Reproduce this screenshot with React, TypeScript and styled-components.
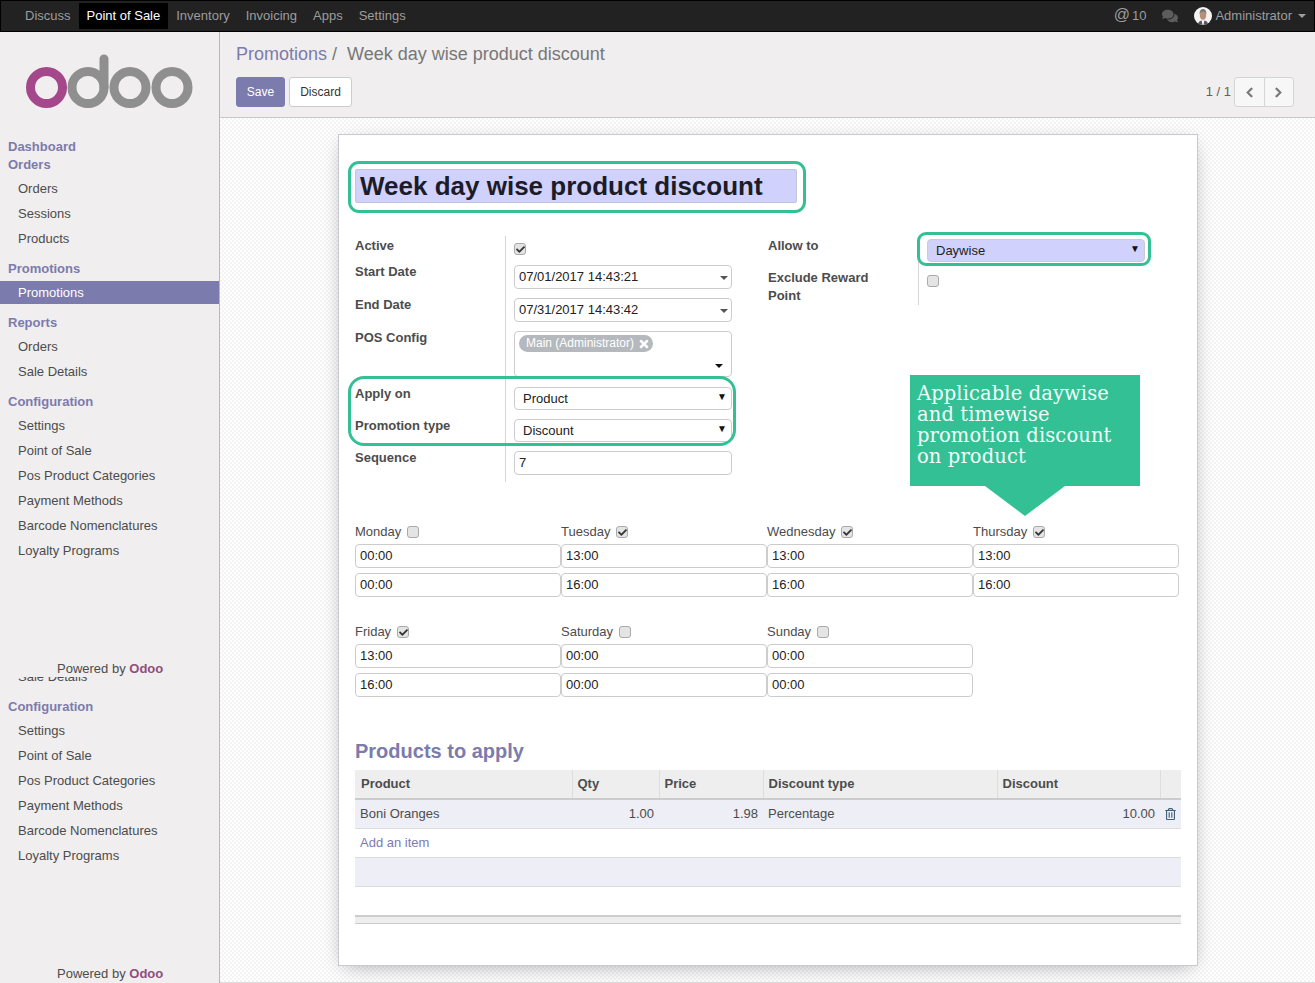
import React from 'react';
import styled, { createGlobalStyle } from 'styled-components';
import { FaChevronLeft, FaChevronRight, FaComments, FaRegTrashAlt, FaTimes, FaCheck } from 'react-icons/fa';

const PURPLE = '#7c7bad';
const GREEN = '#33c095';

const GlobalStyle = createGlobalStyle`
  html, body {
    margin: 0;
    height: 983px;
    overflow: hidden;
    background: #fff;
  }
  body {
    font-family: "Liberation Sans", Arial, sans-serif;
    font-size: 13px;
    line-height: 18px;
    color: #4c4c4c;
  }
  * {
    box-sizing: border-box;
  }
`;

const Page = styled.div`
  width: 1315px;
  height: 983px;
  display: flex;
  flex-direction: column;
  overflow: hidden;
`;

const TopBar = styled.header`
  height: 32px;
  flex-shrink: 0;
  display: flex;
  justify-content: space-between;
  align-items: stretch;
  padding: 2px 8px 2px 17px;
  background: #222;
  border: 1px solid #000;
`;

const TopNav = styled.nav`
  display: flex;
  margin-left: -1px;
`;

const TopLink = styled.a<{ active?: boolean }>`
  display: flex;
  align-items: center;
  padding: 0 8px;
  color: ${(props) => (props.active ? '#fff' : '#9d9d9d')};
  background: ${(props) => (props.active ? '#000' : 'transparent')};
`;

const TopRight = styled.div`
  display: flex;
  align-items: center;
  color: #9d9d9d;
`;

const AtCount = styled.span`
  display: flex;
  align-items: center;
  gap: 2px;
  margin-right: 16px;
`;

const AtSign = styled.span`
  font-size: 16px;
  margin-top: -2px;
`;

const ChatIcon = styled(FaComments)`
  width: 16px;
  height: 16px;
  margin-right: 16px;
  color: #5d5d5d;
`;

const Avatar = styled.svg`
  width: 18px;
  height: 18px;
  margin-right: 3px;
  border-radius: 50%;
`;

const Caret = styled.span`
  width: 0;
  height: 0;
  margin-left: 6px;
  border-left: 4px solid transparent;
  border-right: 4px solid transparent;
  border-top: 4px solid #9d9d9d;
`;

const Body = styled.div`
  flex: 1;
  display: flex;
  min-height: 0;
`;

const Sidebar = styled.aside`
  width: 220px;
  flex-shrink: 0;
  display: flex;
  flex-direction: column;
  background: #f0eeee;
  border-right: 1px solid #b8b8b8;
`;

const SidebarPane = styled.div<{ height: number }>`
  height: ${(props) => props.height}px;
  flex-shrink: 0;
  display: flex;
  flex-direction: column;
`;

const LogoBox = styled.div`
  height: 106px;
  padding: 21px 0 0 26px;
`;

const MenuHead = styled.div<{ top?: number; bottom?: number }>`
  margin-top: ${(props) => props.top ?? 0}px;
  margin-bottom: ${(props) => props.bottom ?? 0}px;
  padding: 0 8px;
  font-weight: bold;
  color: ${PURPLE};
`;

const MenuItem = styled.div<{ active?: boolean }>`
  height: 25px;
  flex-shrink: 0;
  padding: 0 18px;
  line-height: 25px;
  color: ${(props) => (props.active ? '#fff' : '#4c4c4c')};
  background: ${(props) => (props.active ? PURPLE : 'transparent')};
`;

const ActiveItem = styled(MenuItem)`
  height: 23px;
  line-height: 23px;
  margin: 3px 0 0;
`;

// the menu scrolled under the footer, only the feet of the letters show
const ClippedItem = styled.div`
  height: 5px;
  flex-shrink: 0;
  overflow: hidden;
  ${MenuItem} {
    margin-top: -13px;
  }
`;

const SidebarFooter = styled.div`
  margin-top: auto;
  height: 17px;
  padding-left: 57px;
  background: #f0eeee;
  b {
    color: #8f4f7f;
  }
`;

const Main = styled.main`
  flex: 1;
  min-width: 0;
  display: flex;
  flex-direction: column;
`;

const ControlPanel = styled.div`
  height: 86px;
  flex-shrink: 0;
  padding: 10px 21px 0 16px;
  background: #f0eeee;
  border-bottom: 1px solid #c8c8c8;
`;

const Breadcrumb = styled.div`
  height: 24px;
  margin-bottom: 11px;
  font-size: 18px;
  line-height: 24px;
  color: #777;
  a {
    color: ${PURPLE};
  }
  span {
    margin: 0 0 0 5px;
  }
`;

const ButtonRow = styled.div`
  display: flex;
  align-items: center;
  gap: 4px;
`;

const PrimaryButton = styled.button`
  width: 49px;
  height: 30px;
  padding: 0;
  font: 12px "Liberation Sans", Arial, sans-serif;
  color: #fff;
  background: ${PURPLE};
  border: 1px solid ${PURPLE};
  border-radius: 3px;
`;

const SecondaryButton = styled.button`
  width: 63px;
  height: 30px;
  padding: 0;
  font: 12px "Liberation Sans", Arial, sans-serif;
  color: #333;
  background: #fff;
  border: 1px solid #ccc;
  border-radius: 3px;
`;

const Pager = styled.div`
  margin-left: auto;
  display: flex;
  align-items: center;
  gap: 3px;
  color: #6d5c55;
`;

const PagerGroup = styled.div`
  display: flex;
  width: 60px;
  height: 30px;
  background: #f7f7f7;
  border: 1px solid #d5d5d5;
  border-radius: 3px;
`;

const PagerButton = styled.div<{ last?: boolean }>`
  flex: 1;
  display: flex;
  align-items: center;
  justify-content: center;
  color: #777;
  border-left: ${(props) => (props.last ? '1px solid #d5d5d5' : 'none')};
  svg {
    width: 11px;
    height: 11px;
    stroke: currentColor;
    stroke-width: 30;
  }
`;

const Content = styled.div`
  flex: 1;
  min-height: 0;
  padding: 16px 117px 0 118px;
  background-color: #fff;
  background-image: conic-gradient(#f4f4f4 25%, transparent 0 50%, #f4f4f4 0 75%, transparent 0);
  background-size: 4px 4px;
  border-bottom: 1px solid #ddd;
`;

const Sheet = styled.div`
  position: relative;
  width: 860px;
  height: 832px;
  padding: 26px 16px 0;
  background: #fff;
  border: 1px solid #c9c9d2;
  box-shadow: 0 5px 20px -6px rgba(0, 0, 0, 0.35);
`;

const TitleFrame = styled.div`
  width: 458px;
  height: 52px;
  margin-left: -7px;
  padding: 5px 6px 0 4px;
  border: 3px solid ${GREEN};
  border-radius: 11px;
`;

const TitleInput = styled.div`
  height: 34px;
  padding-left: 4px;
  font-size: 26px;
  font-weight: bold;
  line-height: 32px;
  color: #1c1c28;
  white-space: nowrap;
  background: #d0d1fd;
  border: 1px solid #c4c4d8;
  border-radius: 2px;
`;

const FormColumns = styled.div`
  display: flex;
  margin-top: 23px;
`;

const FieldGroup = styled.div<{ width: number }>`
  width: ${(props) => props.width}px;
  flex-shrink: 0;
`;

const FieldRow = styled.div<{ height: number }>`
  display: flex;
  height: ${(props) => props.height}px;
`;

const FieldLabel = styled.label`
  width: 150px;
  flex-shrink: 0;
  padding: 1px 20px 0 0;
  font-weight: bold;
`;

const FieldValue = styled.div<{ top?: number }>`
  flex: 1;
  padding: ${(props) => props.top ?? 3}px 0 0 8px;
  border-left: 1px solid #d5d5d5;
`;

const TextBox = styled.div<{ width?: number }>`
  position: relative;
  width: ${(props) => props.width ?? 218}px;
  height: 24px;
  padding-left: 4px;
  line-height: 22px;
  color: #222;
  background: #fff;
  border: 1px solid #ccc;
  border-radius: 4px;
  white-space: nowrap;
`;

const DownTriangle = styled.span<{ dark?: boolean }>`
  position: absolute;
  right: 3px;
  top: 10px;
  width: 0;
  height: 0;
  border-left: 4px solid transparent;
  border-right: 4px solid transparent;
  border-top: 4px solid ${(props) => (props.dark ? '#111' : '#555')};
`;

const SelectBox = styled(TextBox)<{ tint?: boolean }>`
  height: 23px;
  padding-left: 8px;
  background: ${(props) => (props.tint ? '#d0d1fd' : '#fff')};
`;

const SelectArrow = styled.span`
  position: absolute;
  right: 4px;
  top: 1px;
  font-size: 10px;
  line-height: 16px;
  color: #111;
`;

const TagBox = styled(TextBox)`
  height: 46px;
  padding: 3px 0 0 4px;
  line-height: 17px;
`;

const Tag = styled.span`
  display: inline-flex;
  align-items: center;
  gap: 4px;
  height: 17px;
  padding: 0 3px 0 7px;
  font-size: 12px;
  line-height: 17px;
  vertical-align: top;
  color: #fff;
  background: #b5b9bd;
  border-radius: 9px;
  svg {
    width: 12px;
    height: 12px;
    stroke: currentColor;
    stroke-width: 20;
  }
`;

const TagArrow = styled(DownTriangle)`
  top: auto;
  bottom: 8px;
  right: 8px;
`;

const CheckBox = styled.span`
  display: inline-flex;
  align-items: center;
  justify-content: center;
  width: 12px;
  height: 12px;
  vertical-align: top;
  color: #333;
  background: #e4e4e4;
  border: 1px solid #aaa;
  border-radius: 3px;
  svg {
    width: 9px;
    height: 9px;
  }
`;

const Outline = styled.div<{ left: number; top: number; width: number; height: number; radius: number }>`
  position: absolute;
  left: ${(props) => props.left}px;
  top: ${(props) => props.top}px;
  width: ${(props) => props.width}px;
  height: ${(props) => props.height}px;
  border: 3px solid ${GREEN};
  border-radius: ${(props) => props.radius}px;
  pointer-events: none;
`;

const Callout = styled.div`
  position: absolute;
  left: 571px;
  top: 240px;
  width: 230px;
  height: 111px;
  padding: 8px 7px 0;
  font-family: "DejaVu Serif", serif;
  font-size: 19.5px;
  line-height: 21px;
  letter-spacing: 0.1px;
  color: #f2fff9;
  background: ${GREEN};
  &::after {
    content: '';
    position: absolute;
    left: 75px;
    top: 111px;
    border-left: 40px solid transparent;
    border-right: 40px solid transparent;
    border-top: 30px solid ${GREEN};
  }
`;

const DayGrid = styled.div<{ top: number }>`
  display: grid;
  grid-template-columns: repeat(4, 206px);
  margin-top: ${(props) => props.top}px;
`;

const DayCell = styled.div`
  display: flex;
  flex-direction: column;
`;

const DayLabel = styled.div`
  display: flex;
  align-items: center;
  gap: 6px;
  height: 18px;
  margin-bottom: 3px;
`;

const TimeBox = styled(TextBox)`
  width: 206px;
  margin-bottom: 5px;
`;

const SectionTitle = styled.h2`
  margin: 37px 0 7px;
  font-size: 20px;
  font-weight: bold;
  line-height: 24px;
  color: ${PURPLE};
`;

const LineTable = styled.table`
  width: 826px;
  table-layout: fixed;
  border-collapse: collapse;
`;

const HeadCell = styled.th<{ width: number }>`
  width: ${(props) => props.width}px;
  height: 29px;
  padding: 0 5px;
  font-weight: bold;
  text-align: left;
  background: #eee;
  border-left: 1px solid #ddd;
  border-bottom: 2px solid #ccc;
  &:first-child {
    border-left: none;
    padding-left: 6px;
  }
`;

const DataRow = styled.tr<{ tint?: boolean }>`
  height: 29px;
  background: ${(props) => (props.tint ? '#eeeef6' : '#fff')};
  border-bottom: 1px solid #ddd;
`;

const Cell = styled.td<{ right?: boolean }>`
  padding: 0 5px;
  text-align: ${(props) => (props.right ? 'right' : 'left')};
  color: #4c4c4c;
`;

const TrashCell = styled(Cell)`
  padding: 0;
  text-align: center;
  svg {
    display: inline-block;
    width: 11px;
    height: 12px;
    vertical-align: -2px;
    color: #3f6078;
  }
`;

const AddLink = styled.a`
  color: ${PURPLE};
`;

const TableFoot = styled.div`
  width: 826px;
  height: 9px;
  margin-top: 28px;
  background: #eee;
  border-top: 2px solid #ccc;
  border-bottom: 1px solid #ccc;
`;

const menuTail = ['Settings', 'Point of Sale', 'Pos Product Categories', 'Payment Methods', 'Barcode Nomenclatures', 'Loyalty Programs'];

const ConfigMenu = ({ top }: { top: number }) => (
  <>
    <MenuHead top={top} bottom={2}>
      Configuration
    </MenuHead>
    {menuTail.map((item) => (
      <MenuItem key={item}>{item}</MenuItem>
    ))}
  </>
);

const Logo = () => (
  <svg width="168" height="56" viewBox="0 0 168 56" fill="none">
    <circle cx="20.5" cy="34.5" r="16" stroke="#a4478b" strokeWidth="9" />
    <circle cx="62" cy="34.5" r="16" stroke="#8f8f8f" strokeWidth="9" />
    <path d="M78 34.5V6" stroke="#8f8f8f" strokeWidth="9" strokeLinecap="round" />
    <circle cx="104" cy="34.5" r="16" stroke="#8f8f8f" strokeWidth="9" />
    <circle cx="146" cy="34.5" r="16" stroke="#8f8f8f" strokeWidth="9" />
  </svg>
);

const Face = () => (
  <Avatar viewBox="0 0 18 18">
    <rect width="18" height="18" fill="#f6f4f2" />
    <path d="M3.500 18c.5-3.400 2.500-4.600 5.500-4.600s5 1.200 5.500 4.600z" fill="#55555c" />
    <path d="M7.600 13.200h2.800L9.500 18h-1z" fill="#fff" />
    <ellipse cx="9" cy="8" rx="3.200" ry="4.800" fill="#b98f78" />
    <path d="M5.700 7.500C5.300 3.600 7 2 9 2s3.700 1.600 3.300 5.500c-.4-1.800-1.200-2.700-3.300-2.700s-2.900.9-3.300 2.700z" fill="#7b7b7b" />
  </Avatar>
);

const Check = ({ on }: { on?: boolean }) => <CheckBox>{on && <FaCheck />}</CheckBox>;

type Day = { name: string; on: boolean; from: string; to: string };

const firstDays: Day[] = [
  { name: 'Monday', on: false, from: '00:00', to: '00:00' },
  { name: 'Tuesday', on: true, from: '13:00', to: '16:00' },
  { name: 'Wednesday', on: true, from: '13:00', to: '16:00' },
  { name: 'Thursday', on: true, from: '13:00', to: '16:00' },
];

const secondDays: Day[] = [
  { name: 'Friday', on: true, from: '13:00', to: '16:00' },
  { name: 'Saturday', on: false, from: '00:00', to: '00:00' },
  { name: 'Sunday', on: false, from: '00:00', to: '00:00' },
];

const DayRow = ({ days, top }: { days: Day[]; top: number }) => (
  <DayGrid top={top}>
    {days.map((day) => (
      <DayCell key={day.name}>
        <DayLabel>
          {day.name} <Check on={day.on} />
        </DayLabel>
        <TimeBox>{day.from}</TimeBox>
        <TimeBox>{day.to}</TimeBox>
      </DayCell>
    ))}
  </DayGrid>
);

const App = () => (
  <Page>
    <GlobalStyle />
    <TopBar>
      <TopNav>
        <TopLink>Discuss</TopLink>
        <TopLink active>Point of Sale</TopLink>
        <TopLink>Inventory</TopLink>
        <TopLink>Invoicing</TopLink>
        <TopLink>Apps</TopLink>
        <TopLink>Settings</TopLink>
      </TopNav>
      <TopRight>
        <AtCount>
          <AtSign>@</AtSign>
          10
        </AtCount>
        <ChatIcon />
        <Face />
        Administrator
        <Caret />
      </TopRight>
    </TopBar>
    <Body>
      <Sidebar>
        <SidebarPane height={645}>
          <LogoBox>
            <Logo />
          </LogoBox>
          <MenuHead>Dashboard</MenuHead>
          <MenuHead bottom={2}>Orders</MenuHead>
          <MenuItem>Orders</MenuItem>
          <MenuItem>Sessions</MenuItem>
          <MenuItem>Products</MenuItem>
          <MenuHead top={9}>Promotions</MenuHead>
          <ActiveItem active>Promotions</ActiveItem>
          <MenuHead top={10} bottom={2}>
            Reports
          </MenuHead>
          <MenuItem>Orders</MenuItem>
          <MenuItem>Sale Details</MenuItem>
          <ConfigMenu top={9} />
          <SidebarFooter>
            Powered by <b>Odoo</b>
          </SidebarFooter>
        </SidebarPane>
        <SidebarPane height={305}>
          <ClippedItem>
            <MenuItem>Sale Details</MenuItem>
          </ClippedItem>
          <ConfigMenu top={16} />
          <SidebarFooter>
            Powered by <b>Odoo</b>
          </SidebarFooter>
        </SidebarPane>
      </Sidebar>
      <Main>
        <ControlPanel>
          <Breadcrumb>
            <a>Promotions</a> / <span>Week day wise product discount</span>
          </Breadcrumb>
          <ButtonRow>
            <PrimaryButton>Save</PrimaryButton>
            <SecondaryButton>Discard</SecondaryButton>
            <Pager>
              1 / 1
              <PagerGroup>
                <PagerButton>
                  <FaChevronLeft />
                </PagerButton>
                <PagerButton last>
                  <FaChevronRight />
                </PagerButton>
              </PagerGroup>
            </Pager>
          </ButtonRow>
        </ControlPanel>
        <Content>
          <Sheet>
            <TitleFrame>
              <TitleInput>Week day wise product discount</TitleInput>
            </TitleFrame>
            <FormColumns>
              <FieldGroup width={413}>
                <FieldRow height={26}>
                  <FieldLabel>Active</FieldLabel>
                  <FieldValue top={7}>
                    <Check on />
                  </FieldValue>
                </FieldRow>
                <FieldRow height={33}>
                  <FieldLabel>Start Date</FieldLabel>
                  <FieldValue>
                    <TextBox>
                      07/01/2017 14:43:21
                      <DownTriangle />
                    </TextBox>
                  </FieldValue>
                </FieldRow>
                <FieldRow height={33}>
                  <FieldLabel>End Date</FieldLabel>
                  <FieldValue>
                    <TextBox>
                      07/31/2017 14:43:42
                      <DownTriangle />
                    </TextBox>
                  </FieldValue>
                </FieldRow>
                <FieldRow height={56}>
                  <FieldLabel>POS Config</FieldLabel>
                  <FieldValue>
                    <TagBox>
                      <Tag>
                        Main (Administrator) <FaTimes />
                      </Tag>
                      <TagArrow dark />
                    </TagBox>
                  </FieldValue>
                </FieldRow>
                <FieldRow height={32}>
                  <FieldLabel>Apply on</FieldLabel>
                  <FieldValue>
                    <SelectBox>
                      Product
                      <SelectArrow>▼</SelectArrow>
                    </SelectBox>
                  </FieldValue>
                </FieldRow>
                <FieldRow height={32}>
                  <FieldLabel>Promotion type</FieldLabel>
                  <FieldValue>
                    <SelectBox>
                      Discount
                      <SelectArrow>▼</SelectArrow>
                    </SelectBox>
                  </FieldValue>
                </FieldRow>
                <FieldRow height={34}>
                  <FieldLabel>Sequence</FieldLabel>
                  <FieldValue>
                    <TextBox>7</TextBox>
                  </FieldValue>
                </FieldRow>
              </FieldGroup>
              <FieldGroup width={378}>
                <FieldRow height={32}>
                  <FieldLabel>Allow to</FieldLabel>
                  <FieldValue>
                    <SelectBox tint>
                      Daywise
                      <SelectArrow>▼</SelectArrow>
                    </SelectBox>
                  </FieldValue>
                </FieldRow>
                <FieldRow height={37}>
                  <FieldLabel>Exclude Reward Point</FieldLabel>
                  <FieldValue top={7}>
                    <Check />
                  </FieldValue>
                </FieldRow>
              </FieldGroup>
            </FormColumns>
            <DayRow days={firstDays} top={41} />
            <DayRow days={secondDays} top={21} />
            <SectionTitle>Products to apply</SectionTitle>
            <LineTable>
              <thead>
                <tr>
                  <HeadCell width={217}>Product</HeadCell>
                  <HeadCell width={87}>Qty</HeadCell>
                  <HeadCell width={104}>Price</HeadCell>
                  <HeadCell width={234}>Discount type</HeadCell>
                  <HeadCell width={163}>Discount</HeadCell>
                  <HeadCell width={21} />
                </tr>
              </thead>
              <tbody>
                <DataRow tint>
                  <Cell>Boni Oranges</Cell>
                  <Cell right>1.00</Cell>
                  <Cell right>1.98</Cell>
                  <Cell>Percentage</Cell>
                  <Cell right>10.00</Cell>
                  <TrashCell>
                    <FaRegTrashAlt />
                  </TrashCell>
                </DataRow>
                <DataRow>
                  <Cell colSpan={6}>
                    <AddLink>Add an item</AddLink>
                  </Cell>
                </DataRow>
                <DataRow tint>
                  <Cell colSpan={6} />
                </DataRow>
              </tbody>
            </LineTable>
            <TableFoot />
            <Outline left={9} top={241} width={388} height={70} radius={16} />
            <Outline left={578} top={97} width={234} height={34} radius={9} />
            <Callout>
              Applicable daywise and timewise promotion discount on product
            </Callout>
          </Sheet>
        </Content>
      </Main>
    </Body>
  </Page>
);

export default App;
